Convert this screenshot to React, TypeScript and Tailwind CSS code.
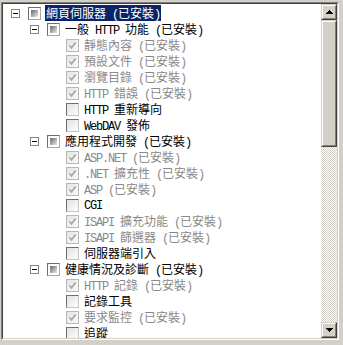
import React from 'react';

type Kind = 'tri' | 'checked' | 'unchecked';
type Item = { level: 0 | 1 | 2; text: string; kind: Kind; expand?: boolean; gray?: boolean; selected?: boolean };

const items: Item[] = [
  { level: 0, text: '網頁伺服器 (已安裝)', kind: 'tri', expand: true, selected: true },
  { level: 1, text: '一般 HTTP 功能 (已安裝)', kind: 'tri', expand: true },
  { level: 2, text: '靜態內容 (已安裝)', kind: 'checked', gray: true },
  { level: 2, text: '預設文件 (已安裝)', kind: 'checked', gray: true },
  { level: 2, text: '瀏覽目錄 (已安裝)', kind: 'checked', gray: true },
  { level: 2, text: 'HTTP 錯誤 (已安裝)', kind: 'checked', gray: true },
  { level: 2, text: 'HTTP 重新導向', kind: 'unchecked' },
  { level: 2, text: 'WebDAV 發佈', kind: 'unchecked' },
  { level: 1, text: '應用程式開發 (已安裝)', kind: 'tri', expand: true },
  { level: 2, text: 'ASP.NET (已安裝)', kind: 'checked', gray: true },
  { level: 2, text: '.NET 擴充性 (已安裝)', kind: 'checked', gray: true },
  { level: 2, text: 'ASP (已安裝)', kind: 'checked', gray: true },
  { level: 2, text: 'CGI', kind: 'unchecked' },
  { level: 2, text: 'ISAPI 擴充功能 (已安裝)', kind: 'checked', gray: true },
  { level: 2, text: 'ISAPI 篩選器 (已安裝)', kind: 'checked', gray: true },
  { level: 2, text: '伺服器端引入', kind: 'unchecked' },
  { level: 1, text: '健康情況及診斷 (已安裝)', kind: 'tri', expand: true },
  { level: 2, text: 'HTTP 記錄 (已安裝)', kind: 'checked', gray: true },
  { level: 2, text: '記錄工具', kind: 'unchecked' },
  { level: 2, text: '要求監控 (已安裝)', kind: 'checked', gray: true },
  { level: 2, text: '追蹤', kind: 'unchecked' },
];

const padByLevel = ['pl-[8px]', 'pl-[27px]', 'pl-[46px]'];

function Label({ text }: { text: string }) {
  const parts = text.split(/([\x20-\x7e]+)/).filter((p) => p.length > 0);
  return (
    <>
      {parts.map((p, i) =>
        /^[\x20-\x7e]+$/.test(p) ? (
          <span key={i} className="inline-block leading-[15px] whitespace-pre font-['Liberation_Mono',monospace] tracking-[-1.2px]">
            {p}
          </span>
        ) : (
          <span key={i} className="inline-block leading-[15px] font-['Noto_Sans_CJK_TC',sans-serif]">
            {p}
          </span>
        )
      )}
    </>
  );
}

function Expander() {
  return (
    <div className="w-[9px] h-[9px] border border-[#848484] bg-white flex items-center justify-center shrink-0">
      <div className="w-[5px] h-px bg-black" />
    </div>
  );
}

function Check({ kind }: { kind: Kind }) {
  if (kind === 'tri') {
    return (
      <div className="w-[13px] h-[13px] border border-t-[#6e6e6e] border-l-[#6e6e6e] border-r-[#a8a8a8] border-b-[#a8a8a8] bg-white flex items-center justify-center shrink-0">
        <div className="w-[7px] h-[7px] bg-gradient-to-br from-[#6a6a6a] via-[#a8a8a8] to-[#ececec]" />
      </div>
    );
  }
  if (kind === 'checked') {
    return (
      <div className="w-[13px] h-[13px] border border-[#b8b8b8] bg-gradient-to-br from-[#e4e4e4] to-[#fbfbfb] flex items-center justify-center shrink-0">
        <svg width="11" height="11" viewBox="0 0 11 11">
          <path d="M2.5 5.5 L4.5 8 L8.5 2.5" fill="none" stroke="#a2a2a2" strokeWidth="1.6" />
        </svg>
      </div>
    );
  }
  return (
    <div className="w-[13px] h-[13px] border border-t-[#6f6f6f] border-l-[#6f6f6f] border-r-[#c4c4c4] border-b-[#c4c4c4] bg-gradient-to-br from-[#e2e2e2] to-white shrink-0" />
  );
}

function RaisedButton({ children, className = '' }: { children?: React.ReactNode; className?: string }) {
  return (
    <div className={`border border-t-[#d4d0c8] border-l-[#d4d0c8] border-r-[#404040] border-b-[#404040] ${className}`}>
      <div className="w-full h-full border border-t-white border-l-white border-r-[#808080] border-b-[#808080] bg-[#d4d0c8] flex items-center justify-center">
        {children}
      </div>
    </div>
  );
}

export default function App() {
  return (
    <div className="w-[343px] h-[345px] bg-[#d4d0c8] pt-[2px] pl-[1px] overflow-hidden">
      <div className="w-[338px] h-[338px] border border-t-[#808080] border-l-[#808080] border-r-white border-b-white">
        <div className="w-full h-full border border-t-[#404040] border-l-[#404040] border-r-[#d4d0c8] border-b-[#d4d0c8] flex">
          <div className="flex-1 bg-white overflow-hidden pt-[1px] text-[12px] leading-4">
            {items.map((it, i) => (
              <div key={i} className={`flex items-center h-4 ${padByLevel[it.level]}`}>
                <div className="w-[9px] h-[9px] shrink-0">{it.expand ? <Expander /> : null}</div>
                <div className="ml-[8px]">
                  <Check kind={it.kind} />
                </div>
                <div
                  className={`ml-[4px] h-4 pl-[1px] pr-[1px] whitespace-nowrap ${
                    it.selected ? 'bg-[#0a246a] text-white' : it.gray ? 'text-[#8a8a8a]' : 'text-black'
                  }`}
                >
                  <Label text={it.text} />
                </div>
              </div>
            ))}
          </div>
          <div className="w-4 flex flex-col">
            <RaisedButton className="h-4">
              <svg width="7" height="4" viewBox="0 0 7 4" shapeRendering="crispEdges">
                <polygon points="3.5,0 7,4 0,4" fill="black" />
              </svg>
            </RaisedButton>
            <RaisedButton className="h-[127px]" />
            <div className="flex-1 bg-[repeating-conic-gradient(#ffffff_0_25%,#d4d0c8_0_50%)] bg-[length:2px_2px]" />
            <RaisedButton className="h-4">
              <svg width="7" height="4" viewBox="0 0 7 4" shapeRendering="crispEdges">
                <polygon points="0,0 7,0 3.5,4" fill="black" />
              </svg>
            </RaisedButton>
          </div>
        </div>
      </div>
    </div>
  );
}
